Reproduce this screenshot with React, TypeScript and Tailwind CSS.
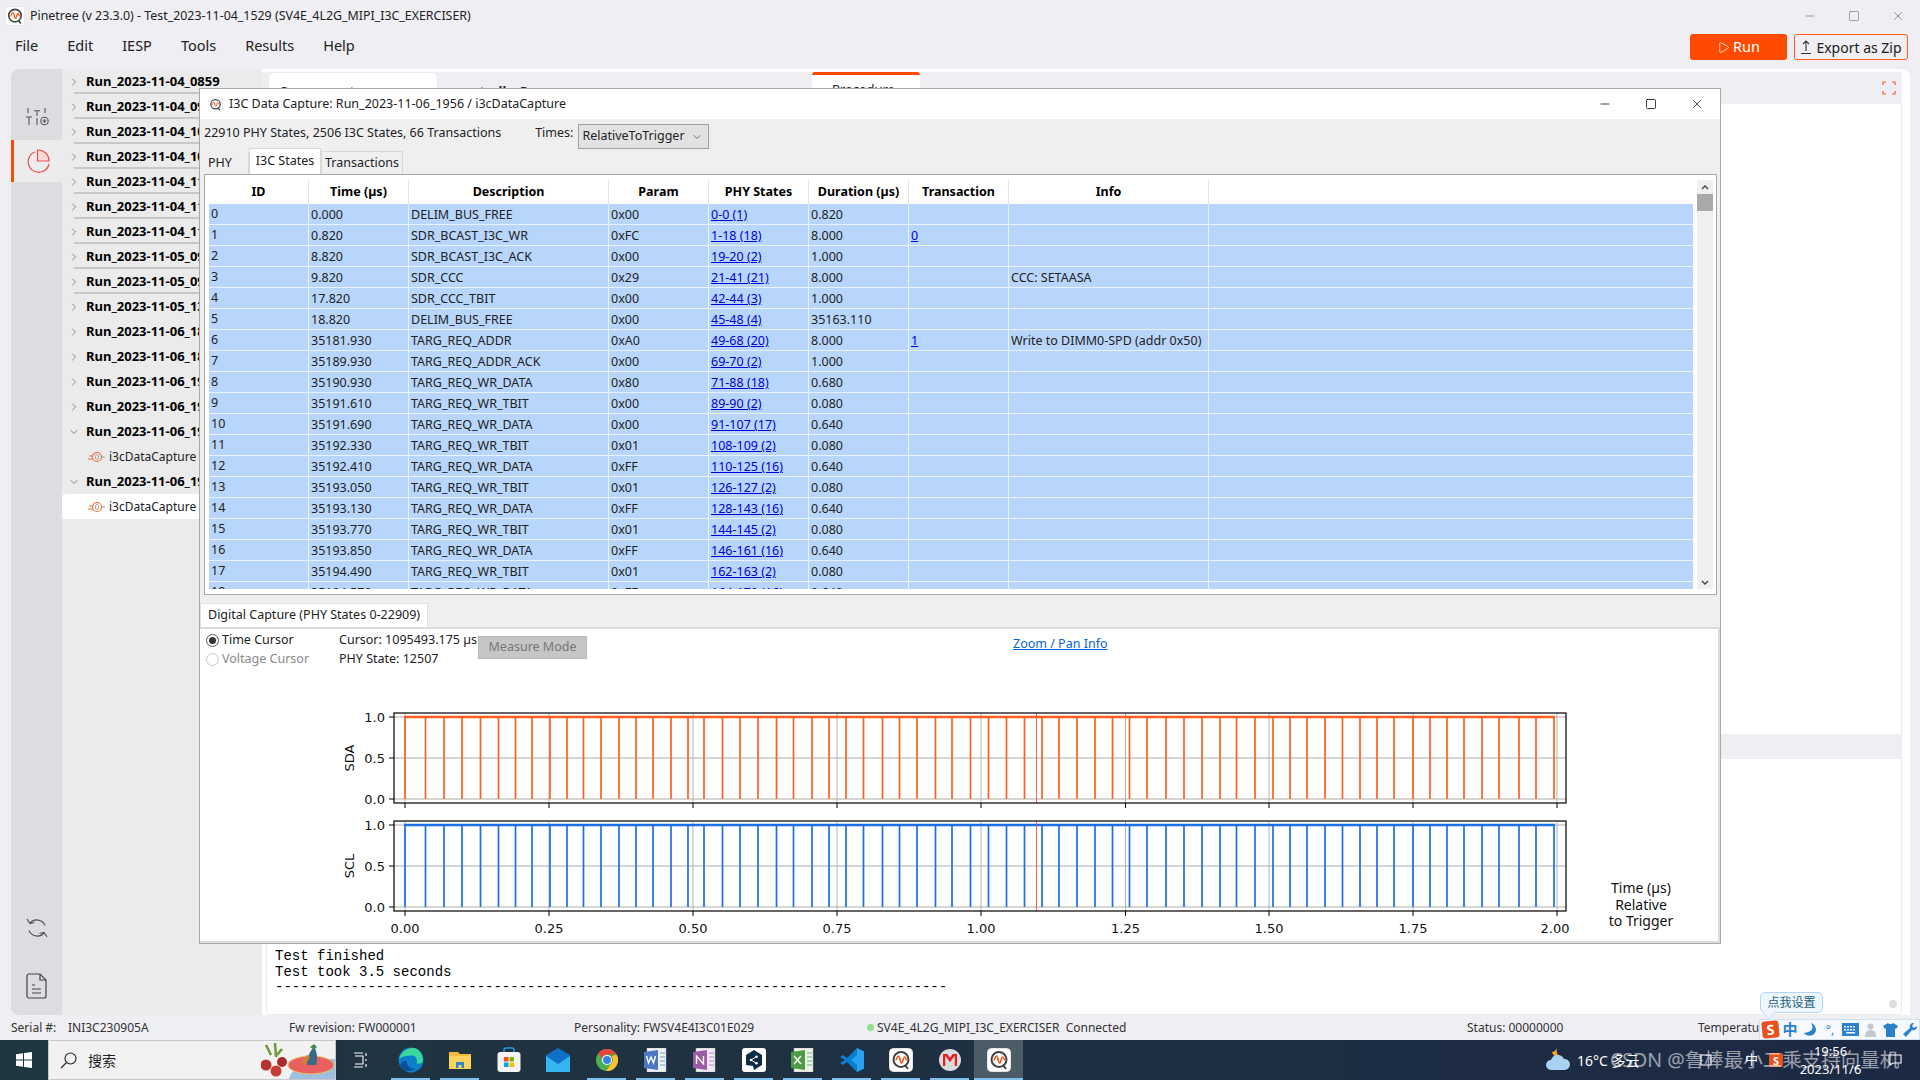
import { ChevronDown, ChevronRight, Minus, Play, Square, X } from 'lucide-react';

const runs = [
  { label: 'Run_2023-11-04_0859', line: true },
  { label: 'Run_2023-11-04_0903', line: true },
  { label: 'Run_2023-11-04_1012', line: true },
  { label: 'Run_2023-11-04_1058', line: true },
  { label: 'Run_2023-11-04_1120', line: true },
  { label: 'Run_2023-11-04_1134', line: true },
  { label: 'Run_2023-11-04_1156', line: true },
  { label: 'Run_2023-11-05_0911', line: true },
  { label: 'Run_2023-11-05_0958', line: true },
  { label: 'Run_2023-11-05_1321' },
  { label: 'Run_2023-11-06_1810' },
  { label: 'Run_2023-11-06_1845' },
  { label: 'Run_2023-11-06_1902' },
  { label: 'Run_2023-11-06_1931' },
  { label: 'Run_2023-11-06_1948', open: true },
  { label: 'Run_2023-11-06_1956', open: true, selected: true },
];

const rows = [
  ['0', '0.000', 'DELIM_BUS_FREE', '0x00', '0-0 (1)', '0.820', '', ''],
  ['1', '0.820', 'SDR_BCAST_I3C_WR', '0xFC', '1-18 (18)', '8.000', '0', ''],
  ['2', '8.820', 'SDR_BCAST_I3C_ACK', '0x00', '19-20 (2)', '1.000', '', ''],
  ['3', '9.820', 'SDR_CCC', '0x29', '21-41 (21)', '8.000', '', 'CCC: SETAASA'],
  ['4', '17.820', 'SDR_CCC_TBIT', '0x00', '42-44 (3)', '1.000', '', ''],
  ['5', '18.820', 'DELIM_BUS_FREE', '0x00', '45-48 (4)', '35163.110', '', ''],
  ['6', '35181.930', 'TARG_REQ_ADDR', '0xA0', '49-68 (20)', '8.000', '1', 'Write to DIMM0-SPD (addr 0x50)'],
  ['7', '35189.930', 'TARG_REQ_ADDR_ACK', '0x00', '69-70 (2)', '1.000', '', ''],
  ['8', '35190.930', 'TARG_REQ_WR_DATA', '0x80', '71-88 (18)', '0.680', '', ''],
  ['9', '35191.610', 'TARG_REQ_WR_TBIT', '0x00', '89-90 (2)', '0.080', '', ''],
  ['10', '35191.690', 'TARG_REQ_WR_DATA', '0x00', '91-107 (17)', '0.640', '', ''],
  ['11', '35192.330', 'TARG_REQ_WR_TBIT', '0x01', '108-109 (2)', '0.080', '', ''],
  ['12', '35192.410', 'TARG_REQ_WR_DATA', '0xFF', '110-125 (16)', '0.640', '', ''],
  ['13', '35193.050', 'TARG_REQ_WR_TBIT', '0x01', '126-127 (2)', '0.080', '', ''],
  ['14', '35193.130', 'TARG_REQ_WR_DATA', '0xFF', '128-143 (16)', '0.640', '', ''],
  ['15', '35193.770', 'TARG_REQ_WR_TBIT', '0x01', '144-145 (2)', '0.080', '', ''],
  ['16', '35193.850', 'TARG_REQ_WR_DATA', '0xFF', '146-161 (16)', '0.640', '', ''],
  ['17', '35194.490', 'TARG_REQ_WR_TBIT', '0x01', '162-163 (2)', '0.080', '', ''],
  ['18', '35194.570', 'TARG_REQ_WR_DATA', '0xFF', '164-179 (16)', '0.640', '', ''],
];

const headers = ['ID', 'Time (µs)', 'Description', 'Param', 'PHY States', 'Duration (µs)', 'Transaction', 'Info', ''];
const tableCols = 'grid grid-cols-[100px_100px_200px_100px_100px_100px_100px_200px_1fr]';

// pulse x positions, in page pixels
const pulses = [
  404, 424.5, 443, 461, 479.5, 497.5, 514.5, 531, 549, 566, 582.5, 600, 618, 635, 652, 670, 687, 703, 721.5, 739, 757,
  775.5, 792.5, 811, 828, 845, 862.5, 881.5, 898.5, 916, 934.5, 951, 969.5, 987.5, 1005.5, 1023.5, 1041, 1058, 1076,
  1094, 1111.5, 1128.5, 1146, 1165, 1183, 1201, 1219, 1235.5, 1254, 1272, 1289, 1306, 1324, 1341.5, 1359, 1376, 1393,
  1412, 1429, 1446, 1463, 1481, 1498, 1518, 1535, 1553,
];
const xTicks = [
  { x: 404, label: '0.00' },
  { x: 548, label: '0.25' },
  { x: 692, label: '0.50' },
  { x: 836, label: '0.75' },
  { x: 980, label: '1.00' },
  { x: 1124.5, label: '1.25' },
  { x: 1268, label: '1.50' },
  { x: 1412, label: '1.75' },
  { x: 1556, label: '2.00' },
];

function AppLogo({ size = 20 }: { size?: number }) {
  return (
    <svg width={size} height={size} viewBox="0 0 24 24">
      <rect x="0.5" y="0.5" width="23" height="23" rx="4" fill="#fff" stroke="#e4e4e4" />
      <circle cx="12" cy="11.5" r="7.5" fill="none" stroke="#444" strokeWidth="2" />
      <path d="M16 17l3 4" stroke="#444" strokeWidth="2" />
      <path d="M6.5 12c1.5 0 1.5-4 3-4s1.5 7 3 7 1.5-6 3-6 1 3 2.500 3" fill="none" stroke="#f05a22" strokeWidth="1.6" />
    </svg>
  );
}

function CaptureIcon() {
  return (
    <svg width="18" height="12" viewBox="0 0 18 12" className="shrink-0">
      <circle cx="9" cy="6" r="4.500" fill="none" stroke="#f0703a" strokeWidth="1.200" />
      <rect x="7.500" y="3.500" width="3" height="5" rx="1.500" fill="none" stroke="#999" strokeWidth="0.800" />
      <path d="M0 8h5M1 5h3" stroke="#f0703a" strokeWidth="1" />
      <path d="M14 6h3" stroke="#999" strokeWidth="1" />
    </svg>
  );
}

function SlidersIcon() {
  return (
    <svg width="24" height="20" viewBox="0 0 24 20" fill="none" stroke="#555" strokeWidth="1.100">
      <path d="M3 1v5M12 4v5M20 1v5M9 3.800h6M1 10h6M4 10v8M12 11v7" />
      <circle cx="19.500" cy="14" r="3.700" />
      <path d="M17.500 14h4M19.500 12v4" />
    </svg>
  );
}

function PieIcon() {
  return (
    <svg width="24" height="24" viewBox="0 0 24 24" fill="none" stroke="#e8504f" strokeWidth="1.200">
      <path d="M9.500 2.800A10.500 10.500 0 1 0 23 15" />
      <path d="M11.500 1v11H23A11 11 0 0 0 11.500 1z" fill="#fbd9d6" />
    </svg>
  );
}

function RefreshIcon() {
  return (
    <svg width="24" height="24" viewBox="0 0 24 24" fill="none" stroke="#555" strokeWidth="1.200">
      <path d="M5 7a9 9 0 0 1 15 2.500M19 17a9 9 0 0 1-15-2.500" />
      <path d="M2 3l3 4.500 4.500-1M22 21l-3-4.500-4.500 1" />
    </svg>
  );
}

function DocIcon() {
  return (
    <svg width="22" height="26" viewBox="0 0 22 26" fill="none" stroke="#444" strokeWidth="1.200">
      <path d="M3 1h11l6 6v16a2 2 0 0 1-2 2H3a2 2 0 0 1-2-2V3a2 2 0 0 1 2-2z" />
      <path d="M14 1v6h6M6 12h3M6 16h9M6 20h9" />
    </svg>
  );
}

function ExportIcon() {
  return (
    <svg width="12" height="16" viewBox="0 0 12 16" fill="none" stroke="#333" strokeWidth="1.100">
      <path d="M6 12V2M3 5l3-3 3 3M1 14.500h10" />
    </svg>
  );
}

function EdgeIcon() {
  return (
    <svg width="26" height="26" viewBox="0 0 24 24">
      <circle cx="12" cy="12" r="11.500" fill="#0c7fc8" />
      <path d="M1 11C3 3 10 0 15 1c5 1 8 6 8 11 0 3-3 4-6 3 2-5-2-8-6-7-4 0-8 1-10 3z" fill="#3bd5a0" />
      <path d="M8 13c0 5 4 8 8 7-5 4-12 2-14-3 1-3 4-5 6-4z" fill="#0a4f9c" />
    </svg>
  );
}
function FolderIcon() {
  return (
    <svg width="22" height="20" viewBox="0 0 22 20">
      <path d="M0 2h9l2 2h11v15H0z" fill="#f2bb3c" />
      <path d="M0 6h22v13H0z" fill="#fbd45e" />
      <path d="M7 18v-6h8v6h-2.500v-3h-3v3z" fill="#2f87c9" />
    </svg>
  );
}
function StoreIcon() {
  return (
    <svg width="24" height="26" viewBox="0 0 24 26">
      <path d="M7 6V3a2 2 0 0 1 2-2h6a2 2 0 0 1 2 2v3" fill="none" stroke="#1f9fe0" strokeWidth="1.500" />
      <rect x="0.500" y="5" width="23" height="20" rx="3" fill="#f4f4f4" />
      <rect x="7" y="10" width="4.500" height="4.500" fill="#f25022" />
      <rect x="12.500" y="10" width="4.500" height="4.500" fill="#7fba00" />
      <rect x="7" y="15.500" width="4.500" height="4.500" fill="#00a4ef" />
      <rect x="12.500" y="15.500" width="4.500" height="4.500" fill="#ffb900" />
    </svg>
  );
}
function MailIcon() {
  return (
    <svg width="24" height="24" viewBox="0 0 24 24">
      <path d="M12 0l12 7v17H0V7z" fill="#0f6fc6" />
      <path d="M0 8l12 8 12-8v16H0z" fill="#35b6f2" />
    </svg>
  );
}
function ChromeIcon() {
  return (
    <svg width="22" height="22" viewBox="0 0 24 24">
      <circle cx="12" cy="12" r="12" fill="#4caf50" />
      <path d="M12 0a12 12 0 0 1 10.400 6H12a6 6 0 0 0-5.800 4.500L2.400 5A12 12 0 0 1 12 0z" fill="#e8453c" />
      <path d="M22.400 6A12 12 0 0 1 11 24l5.400-8A6 6 0 0 0 17 8z" fill="#fbc02d" />
      <circle cx="12" cy="12" r="5.500" fill="#fff" />
      <circle cx="12" cy="12" r="4.300" fill="#3f7fe8" />
    </svg>
  );
}
function DocTile({ page, main, accent, mark }: { page: string; main: string; accent: string; mark: string }) {
  return (
    <svg width="23" height="24" viewBox="0 0 23 24">
      <path d="M3 0h19v24H3z" fill={page} stroke="#aeb4bb" strokeWidth="0.500" />
      <path d="M0 4l14-2v20L0 20z" fill={main} />
      <path d="M16 5h5M16 9h5M16 13h5M16 17h5" stroke={accent} strokeWidth="1.500" />
      <path d={mark} fill="none" stroke="#fff" strokeWidth="1.400" />
    </svg>
  );
}
function DeepLIcon() {
  return (
    <div className="flex h-[24px] w-[24px] items-center justify-center rounded-[3px] bg-white">
      <svg width="18" height="20" viewBox="0 0 18 20">
        <path d="M9 0l8 5v10l-8 5-1-4-7-1V5z" fill="#0f2b46" />
        <path d="M6 10l5-3M6 10l5 3" stroke="#fff" strokeWidth="1" />
        <circle cx="6" cy="10" r="1.300" fill="#fff" />
        <circle cx="11.500" cy="6.800" r="1.300" fill="#fff" />
        <circle cx="11.500" cy="13.200" r="1.300" fill="#fff" />
      </svg>
    </div>
  );
}
function VsCodeIcon() {
  return (
    <svg width="24" height="24" viewBox="0 0 24 24">
      <path d="M17 0l7 3.500v17L17 24 7 14l-4 3-3-2 5-3-5-3 3-2 4 3z" fill="#0a7fd0" />
      <path d="M17 0l7 3.500v17L17 24V17l-6-5 6-5z" fill="#2aa1ee" />
    </svg>
  );
}
function MIcon() {
  return (
    <div className="flex h-[22px] w-[22px] items-center justify-center rounded-full bg-[#dcdcdc]">
      <svg width="14" height="12" viewBox="0 0 14 12">
        <path d="M1 12V1h2.500L7 6l3.500-5H13v11" fill="none" stroke="#e02020" strokeWidth="2.500" />
      </svg>
    </div>
  );
}
function Doodle() {
  return (
    <svg width="74" height="38" viewBox="0 0 74 38" className="shrink-0">
      <path d="M28 38c4-14 22-20 46-20v20z" fill="#9cc0dd" />
      <ellipse cx="50" cy="24" rx="23" ry="9" fill="#e86060" stroke="#e8c86a" />
      <path d="M46 24c0-8 3-14 7-18 3 4 4 12 2 18z" fill="#3b6a86" />
      <path d="M49 6l4-3 3 3-3 3z" fill="#4a8a5a" />
      <path d="M46 14l-6 8 5 1 4-8z" fill="#d8812e" />
      <path d="M5 4l5 10M14 2l1 14M21 8l-5 6" stroke="#6f9a3c" strokeWidth="2.500" />
      <circle cx="5" cy="24" r="5.500" fill="#b8322e" />
      <circle cx="15" cy="30" r="5.500" fill="#c63c36" />
      <circle cx="21" cy="21" r="5" fill="#a82c2a" />
    </svg>
  );
}
function WeatherIcon() {
  return (
    <svg width="26" height="24" viewBox="0 0 26 24" className="shrink-0">
      <path d="M12 0c-1 4 0 7 4 9-4 1-8-1-9-5 2 0 4-2 5-4z" fill="#f5a623" />
      <path d="M6 22a5 5 0 0 1 0-10 7 7 0 0 1 13-1 5.500 5.500 0 0 1 1 11z" fill="#a9d2f2" />
    </svg>
  );
}

function SogouBadge({ size, tilt }: { size: number; tilt?: boolean }) {
  return (
    <span
      className={
        tilt
          ? 'flex shrink-0 -rotate-6 items-center justify-center rounded-[3px] bg-[#e8531d] font-bold leading-none text-white'
          : 'flex shrink-0 items-center justify-center rounded-[2px] bg-[#e8531d] font-bold leading-none text-white'
      }
      style={{ width: size, height: size, fontSize: size - 3 }}
    >
      S
    </span>
  );
}

function PlotAxes({
  top,
  color,
  yLabel,
  showXLabels,
}: {
  top: number;
  color: string;
  yLabel: string;
  showXLabels?: boolean;
}) {
  const bottom = top + 90;
  const hi = top + 4;
  const mid = top + 45;
  const lo = top + 86;
  return (
    <g>
      {xTicks.map((t) => (
        <line key={t.x} x1={t.x} x2={t.x} y1={top} y2={bottom} stroke="#b4b4b4" strokeWidth="1" />
      ))}
      {[hi, mid, lo].map((y) => (
        <line key={y} x1="393" x2="1565" y1={y} y2={y} stroke="#adadad" strokeWidth="1" />
      ))}
      {pulses.map((x) => (
        <line key={x} x1={x} x2={x} y1={hi} y2={lo} stroke={color} strokeWidth="1.700" />
      ))}
      <line x1="403" x2="1554" y1={hi} y2={hi} stroke={color} strokeWidth="2.400" />
      <line x1="1035.5" x2="1035.5" y1={top} y2={bottom} stroke="#e8413a" strokeWidth="0.800" />
      <rect x="393" y={top} width="1172" height="90" fill="none" stroke="#000" strokeWidth="1.200" />
      {xTicks.map((t) => (
        <line key={t.x} x1={t.x} x2={t.x} y1={bottom} y2={bottom + 5} stroke="#000" strokeWidth="1" />
      ))}
      {[
        { y: hi, label: '1.0' },
        { y: mid, label: '0.5' },
        { y: lo, label: '0.0' },
      ].map((t) => (
        <g key={t.label}>
          <line x1="388" x2="393" y1={t.y} y2={t.y} stroke="#000" strokeWidth="1" />
          <text x="384" y={t.y + 5} textAnchor="end" fontSize="13" fontFamily="DejaVu Sans" fill="#111">
            {t.label}
          </text>
        </g>
      ))}
      <text
        x="353"
        y={mid}
        transform={`rotate(-90 353 ${mid})`}
        textAnchor="middle"
        fontSize="13"
        fontFamily="DejaVu Sans"
        fill="#111"
      >
        {yLabel}
      </text>
      {showXLabels &&
        xTicks.map((t) => (
          <text
            key={t.x}
            x={t.label === '2.00' ? 1554 : t.x}
            y={bottom + 22}
            textAnchor="middle"
            fontSize="13"
            fontFamily="DejaVu Sans"
            fill="#111"
          >
            {t.label}
          </text>
        ))}
    </g>
  );
}

function Tree() {
  return (
    <div className="flex w-[200px] shrink-0 flex-col bg-[#ebebeb]">
      {runs.map((run) => (
        <div key={run.label} className="flex flex-col">
          <div className={run.line ? 'ml-[12px] h-[25px] border-b-2 border-[#c8c8c8]' : 'ml-[12px] h-[25px]'}>
            <div className="-ml-[6px] flex h-[25px] items-center gap-[6px] whitespace-nowrap text-[13px] font-bold text-black">
              {run.open ? (
                <ChevronDown size={12} strokeWidth={1.2} className="shrink-0 text-[#444]" />
              ) : (
                <ChevronRight size={12} strokeWidth={1.2} className="shrink-0 text-[#444]" />
              )}
              <span>{run.label}</span>
            </div>
          </div>
          {run.open && (
            <div
              className={
                run.selected
                  ? 'flex h-[25px] items-center gap-[3px] rounded-l-[4px] bg-white pl-[26px] text-[12px] text-[#222]'
                  : 'flex h-[25px] items-center gap-[3px] pl-[26px] text-[12px] text-[#222]'
              }
            >
              <CaptureIcon />
              <span>i3cDataCapture</span>
            </div>
          )}
        </div>
      ))}
    </div>
  );
}

function Dialog() {
  return (
    <div className="absolute left-[199px] top-[88px] flex h-[856px] w-[1522px] flex-col border border-[#a8a8a8] bg-[#efefef] text-[12.5px] text-[#222]">
      {/* Title bar */}
      <div className="flex h-[30px] shrink-0 items-center bg-white pl-[8px]">
        <AppLogo size={15} />
        <span className="ml-[6px]">I3C Data Capture: Run_2023-11-06_1956 / i3cDataCapture</span>
        <div className="ml-auto flex items-center gap-[33px] pr-[16px] text-black">
          <Minus size={14} strokeWidth={1.2} />
          <Square size={12} strokeWidth={1.5} />
          <X size={14} strokeWidth={1.2} />
        </div>
      </div>

      {/* Counts and time mode */}
      <div className="flex h-[30px] shrink-0 pl-[4px]">
        <span className="mt-[5px]">22910 PHY States, 2506 I3C States, 66 Transactions</span>
        <span className="ml-[34px] mt-[5px]">Times:</span>
        <div className="ml-[5px] flex h-[25px] w-[131px] items-center justify-between self-end border border-[#a0a0a0] bg-[#e2e2e2] pl-[3px] pr-[5px]">
          <span>RelativeToTrigger</span>
          <ChevronDown size={12} strokeWidth={1.2} />
        </div>
      </div>

      {/* Tabs */}
      <div className="flex h-[25px] shrink-0 items-end pl-[1px]">
        <div className="flex h-[21px] w-[48px] items-center border-r border-[#d8d8d8] pl-[7px]">PHY</div>
        <div className="flex h-[26px] w-[72px] items-center justify-center border border-b-0 border-[#d8d8d8] bg-white">
          I3C States
        </div>
        <div className="flex h-[23px] w-[82px] items-center justify-center border border-b-0 border-[#d8d8d8]">
          Transactions
        </div>
      </div>

      {/* States table */}
      <div className="ml-[4px] mr-[3px] flex h-[421px] shrink-0 border border-[#a8a8a8] bg-white p-[4px] pb-[5px] pr-[3px] pt-[5px]">
        <div className="flex min-w-0 flex-1 flex-col overflow-hidden">
          <div className={`${tableCols} h-[24px] shrink-0 bg-white font-bold text-black`}>
            {headers.map((h, i) => (
              <div key={i} className="flex items-center justify-center border-r border-[#e4e4e4] last:border-r-0">
                {h}
              </div>
            ))}
          </div>
          {rows.map((r) => (
            <div key={r[0]} className={`${tableCols} h-[21px] shrink-0 border-b border-[#e9f1fb] bg-[#b8d6fb]`}>
              <div className="flex items-center border-r border-[#e9f1fb] pl-[2px]">{r[0]}</div>
              <div className="flex items-center border-r border-[#e9f1fb] pl-[2px] pt-[2px]">{r[1]}</div>
              <div className="flex items-center border-r border-[#e9f1fb] pl-[2px] pt-[2px]">{r[2]}</div>
              <div className="flex items-center border-r border-[#e9f1fb] pl-[2px] pt-[2px]">{r[3]}</div>
              <div className="flex items-center border-r border-[#e9f1fb] pl-[2px] pt-[2px] text-[#0000d8] underline">{r[4]}</div>
              <div className="flex items-center border-r border-[#e9f1fb] pl-[2px] pt-[2px]">{r[5]}</div>
              <div className="flex items-center border-r border-[#e9f1fb] pl-[2px] pt-[2px] text-[#0000d8] underline">{r[6]}</div>
              <div className="flex items-center whitespace-nowrap border-r border-[#e9f1fb] pl-[2px] pt-[2px]">{r[7]}</div>
              <div />
            </div>
          ))}
        </div>
        {/* Scrollbar */}
        <div className="ml-[4px] flex w-[16px] shrink-0 flex-col items-center bg-[#f0f0f0] text-[#555]">
          <svg width="10" height="14" viewBox="0 0 10 14" className="shrink-0" fill="none" stroke="#444" strokeWidth="1.400">
            <path d="M2 9l3-3 3 3" />
          </svg>
          <div className="h-[17px] w-full shrink-0 bg-[#a9a9a9]" />
          <svg width="10" height="14" viewBox="0 0 10 14" className="mt-auto shrink-0" fill="none" stroke="#444" strokeWidth="1.400">
            <path d="M2 6l3 3 3-3" />
          </svg>
        </div>
      </div>

      {/* Capture tab */}
      <div className="mt-[8px] flex h-[24px] w-[228px] shrink-0 items-center border border-b-0 border-[#e0e0e0] bg-white pl-[7px]">
        Digital Capture (PHY States 0-22909)
      </div>

      {/* Capture panel */}
      <div className="flex min-h-0 flex-1 flex-col border-2 border-[#dcdcdc] border-l-0 bg-white">
        <div className="flex h-[60px] shrink-0 pt-[3px]">
          <div className="ml-[6px] flex w-[133px] flex-col gap-[3px]">
            <div className="flex h-[16px] items-center gap-[3px]">
              <span className="flex h-[13px] w-[13px] items-center justify-center rounded-full border border-[#555]">
                <span className="h-[7px] w-[7px] rounded-full bg-[#333]" />
              </span>
              Time Cursor
            </div>
            <div className="flex h-[16px] items-center gap-[3px] text-[#8a8a8a]">
              <span className="h-[13px] w-[13px] rounded-full border border-[#c8c8c8]" />
              Voltage Cursor
            </div>
          </div>
          <div className="flex w-[139px] flex-col gap-[3px] whitespace-nowrap">
            <div className="flex h-[16px] items-center">Cursor: 1095493.175 µs</div>
            <div className="flex h-[16px] items-center">PHY State: 12507</div>
          </div>
          <div className="mt-[4px] flex h-[23px] w-[109px] items-center justify-center border border-[#b8b8b8] bg-[#c6c6c6] text-[#777]">
            Measure Mode
          </div>
          <span className="ml-[426px] mt-[3px] h-[16px] text-[#0a66d6] underline">Zoom / Pan Info</span>
        </div>
        <svg width="1520" height="252" viewBox="199 690 1520 252" className="block shrink-0">
          <PlotAxes top={714} color="#ff5f1f" yLabel="SDA" />
          <PlotAxes top={822} color="#1a6fe8" yLabel="SCL" showXLabels />
          <g fontSize="14" fill="#111" textAnchor="middle">
            <text x="1640" y="894">Time (µs)</text>
            <text x="1640" y="911">Relative</text>
            <text x="1640" y="927">to Trigger</text>
          </g>
        </svg>
      </div>
    </div>
  );
}

function TaskSlot({ bar, active, children }: { bar?: boolean; active?: boolean; children?: React.ReactNode }) {
  return (
    <div className={active ? 'relative flex h-full w-[49px] items-center justify-center bg-[#4b5c66]' : 'relative flex h-full w-[49px] items-center justify-center'}>
      {children}
      {bar && <span className={active ? 'absolute bottom-0 left-0 right-0 h-[2px] bg-[#7fc0ee]' : 'absolute bottom-0 left-[5px] right-[5px] h-[2px] bg-[#7fc0ee]'} />}
    </div>
  );
}

export default function App() {
  return (
    <div className="relative flex h-[1080px] w-[1920px] flex-col overflow-hidden bg-[#eeeef3] font-['Noto_Sans','Noto_Sans_CJK_SC',sans-serif] text-[12px] text-[#222]">
      {/* Title bar */}
      <div className="flex h-[32px] shrink-0 items-center pl-[5px]">
        <AppLogo size={20} />
        <span className="ml-[5px] text-[12.4px]">Pinetree (v 23.3.0) - Test_2023-11-04_1529 (SV4E_4L2G_MIPI_I3C_EXERCISER)</span>
        <div className="ml-auto flex items-center gap-[31px] pr-[15px] text-[#555]">
          <Minus size={14} strokeWidth={1} />
          <Square size={12} strokeWidth={1} />
          <X size={14} strokeWidth={1} />
        </div>
      </div>

      {/* Menu bar */}
      <div className="flex h-[37px] shrink-0 items-start">
        <div className="flex h-[27px] items-center gap-[29px] pl-[15px] text-[14.5px] text-[#222]">
          <span>File</span>
          <span>Edit</span>
          <span>IESP</span>
          <span>Tools</span>
          <span>Results</span>
          <span>Help</span>
        </div>
        <div className="ml-auto mt-[2px] flex gap-[7px] pr-[12px]">
          <div className="flex h-[26px] w-[97px] items-center justify-center gap-[3px] rounded-[3px] bg-[#ff4a00] text-[14.5px] text-white">
            <Play size={13} strokeWidth={1.5} />
            Run
          </div>
          <div className="flex h-[26px] w-[114px] items-center justify-center gap-[4px] rounded-[3px] border border-[#ff5a1f] text-[14px]">
            <ExportIcon />
            Export as Zip
          </div>
        </div>
      </div>

      {/* Main */}
      <div className="flex h-[946px] shrink-0 pl-[11px] pr-[10px]">
        <div className="flex w-[51px] shrink-0 flex-col overflow-hidden rounded-bl-[8px] rounded-tl-[8px] bg-[#dcdde0]">
          <div className="flex h-[71px] shrink-0 items-end justify-center pb-[13px]">
            <SlidersIcon />
          </div>
          <div className="flex h-[42px] shrink-0 items-center justify-center border-l-[3px] border-[#ff4a00] bg-[#ececec]">
            <PieIcon />
          </div>
          <div className="mt-auto flex flex-col items-center gap-[33px] pb-[16px]">
            <RefreshIcon />
            <DocIcon />
          </div>
        </div>
        <Tree />

        {/* Main content behind the dialog */}
        <div className="flex min-w-0 flex-1 flex-col overflow-hidden rounded-tr-[8px] border-r-[8px] border-white bg-white">
          <div className="mt-[3px] flex h-[32px] shrink-0 bg-[#eeeef3]">
            <div className="relative ml-[6px] h-full w-[170px] rounded-t-[6px] border border-[#ececec] bg-white pl-[10px] pt-[9px] text-[13px] font-bold">
              Components
            </div>
            <div className="h-full w-[367px] pl-[18px] pt-[10px] text-[13px] font-bold">controllerParams</div>
            <div className="ml-[7px] h-full w-[108px] rounded-t-[3px] border-t-[3px] border-[#ff4a00] bg-white pl-[20px] pt-[5px] text-[13px]">
              Procedure
            </div>
            <div className="ml-auto flex items-center pr-[6px]">
              <svg width="14" height="14" viewBox="0 0 14 14" fill="none" stroke="#ff5a2a" strokeWidth="1.200">
                <path d="M1 4V1h3M10 1h3v3M13 10v3h-3M4 13H1v-3" />
              </svg>
            </div>
          </div>
          <div className="ml-[4px] flex min-h-0 flex-1 flex-col rounded-b-[4px] border-x border-b border-[#ececec]">
            <div className="ml-auto mt-[630px] h-[25px] w-[180px] shrink-0 bg-[#eeeef3]" />
            <div className="mt-[190px] whitespace-pre pl-[8px] font-['Liberation_Mono',monospace] text-[14px] leading-[15.5px] text-black">
              {'Test finished\nTest took 3.5 seconds\n' + '-'.repeat(80)}
            </div>
            <span className="mb-[6px] ml-auto mr-[4px] mt-auto h-[8px] w-[8px] shrink-0 rounded-full bg-[#dcdde0]" />
          </div>
        </div>
      </div>

      {/* Status bar */}
      <div className="flex h-[25px] shrink-0 items-center whitespace-nowrap pl-[11px] text-[12px] text-[#333]">
        <span className="w-[57px]">Serial #:</span>
        <span className="w-[221px]">INI3C230905A</span>
        <span className="w-[285px]">Fw revision: FW000001</span>
        <span className="w-[293px]">Personality: FWSV4E4I3C01E029</span>
        <span className="flex w-[600px] items-center gap-[3px]">
          <span className="h-[7px] w-[7px] rounded-full bg-[#8ee08e]" />
          SV4E_4L2G_MIPI_I3C_EXERCISER&nbsp;&nbsp;Connected
        </span>
        <span className="w-[231px]">Status: 00000000</span>
        <span>Temperature</span>
      </div>

      {/* Taskbar */}
      <div className="flex h-[40px] shrink-0 items-center bg-gradient-to-r from-[#20363f] to-[#1c2944] text-white">
        <div className="flex h-full w-[48px] shrink-0 items-center justify-center">
          <svg width="16" height="16" viewBox="0 0 16 16" fill="#fff">
            <path d="M0 2.200l7-1v6.400H0zM8 1l8-1v7.600H8zM0 8.400h7v6.400l-7-1zM8 8.400h8V16l-8-1.100z" />
          </svg>
        </div>
        <div className="flex h-full w-[288px] shrink-0 items-center overflow-hidden border border-[#c8c8c8] bg-[#f2f2f2] pl-[11px] text-[14px] text-[#222]">
          <svg width="17" height="17" viewBox="0 0 17 17" fill="none" stroke="#222" strokeWidth="1.100">
            <circle cx="10.500" cy="6.500" r="5.500" />
            <path d="M6.500 10.500L1 16" />
          </svg>
          <span className="ml-[11px]">搜索</span>
          <span className="ml-auto">
            <Doodle />
          </span>
        </div>
        <div className="flex h-full w-[50px] shrink-0 items-center justify-center">
          <svg width="16" height="16" viewBox="0 0 16 16" fill="none" stroke="#fff" strokeWidth="1.100">
            <path d="M1 1h9M1 15h9M2 4h8v8H2M13 1v3M13 7v2M13 12v3" />
          </svg>
        </div>
        <div className="flex h-full shrink-0">
          <TaskSlot bar><EdgeIcon /></TaskSlot>
          <TaskSlot bar><FolderIcon /></TaskSlot>
          <TaskSlot><StoreIcon /></TaskSlot>
          <TaskSlot><MailIcon /></TaskSlot>
          <TaskSlot bar><ChromeIcon /></TaskSlot>
          <TaskSlot bar><DocTile page="#eef2f8" main="#4a78c4" accent="#9db7df" mark="M2.500 8l2 7 2.500-6 2.500 6 2-7" /></TaskSlot>
          <TaskSlot bar><DocTile page="#f0ebf2" main="#9a5aa4" accent="#c9a8cf" mark="M3.500 16V8l7 8V8" /></TaskSlot>
          <TaskSlot bar><DeepLIcon /></TaskSlot>
          <TaskSlot bar><DocTile page="#eaf3e4" main="#4f9a48" accent="#9cc79a" mark="M3 8l7 8M10 8l-7 8" /></TaskSlot>
          <TaskSlot bar><VsCodeIcon /></TaskSlot>
          <TaskSlot bar><AppLogo size={24} /></TaskSlot>
          <TaskSlot bar><MIcon /></TaskSlot>
          <TaskSlot bar active><AppLogo size={24} /></TaskSlot>
        </div>
        <div className="ml-[522px] flex h-full shrink-0 items-center">
          <WeatherIcon />
          <span className="ml-[6px] w-[65px] text-[14px]">16°C 多云</span>
          <svg width="12" height="12" viewBox="0 0 12 12" fill="none" stroke="#fff" strokeWidth="1.200" className="ml-[58px]">
            <path d="M1 1h10v10H1z" />
          </svg>
          <span className="ml-[33px] w-[13px] text-[13px]">中</span>
          <span className="ml-[11px]"><SogouBadge size={14} /></span>
          <span className="ml-[17px] flex w-[61px] flex-col items-center text-[13px] leading-[18px]">
            <span>19:56</span>
            <span>2023/11/6</span>
          </span>
          <svg width="14" height="12" viewBox="0 0 14 12" fill="none" stroke="#fff" strokeWidth="1.100" className="ml-[27px]">
            <path d="M1 1h12v8H5l-3 2V9H1z" />
          </svg>
        </div>
      </div>

      <Dialog />

      {/* IME tooltip and bar */}
      <div className="absolute left-[1760px] top-[992px] flex h-[21px] w-[63px] items-center justify-center rounded-[5px] border border-[#b5d6f2] bg-[#eef6fd] text-[12px] text-[#1d5f7a]">
        点我设置
      </div>
      <svg width="12" height="7" viewBox="0 0 12 7" className="absolute left-[1763px] top-[1012px]">
        <path d="M0 0l6 7 6-7" fill="#eef6fd" stroke="#b5d6f2" strokeWidth="0.800" />
      </svg>
      <div className="absolute left-[1759px] top-[1019px] flex h-[21px] w-[161px] items-center border border-[#cfe2f5] bg-[#f6fafe] text-[#2a82cc]">
        <span className="flex w-[20px] shrink-0 justify-center"><SogouBadge size={17} tilt /></span>
        <span className="flex w-[20px] shrink-0 justify-center text-[15px] font-bold leading-none">中</span>
        <span className="flex w-[20px] shrink-0 justify-center">
          <svg width="12" height="14" viewBox="0 0 12 14" fill="#2a82cc">
            <path d="M7 0c3 4 2 9-7 10 3 4 11 4 12-3 0-3-2-6-5-7z" />
          </svg>
        </span>
        <span className="flex w-[20px] shrink-0 justify-center text-[12px] leading-none">°,</span>
        <span className="flex w-[20px] shrink-0 justify-center">
          <svg width="17" height="13" viewBox="0 0 17 13" fill="#2a82cc">
            <path d="M0 0h17v13H0zM2 3v1.500h2V3zm3 0v1.500h2V3zm3 0v1.500h2V3zm3 0v1.500h2V3zM2 6v1.500h2V6zm3 0v1.500h2V6zm3 0v1.500h2V6zm3 0v1.500h2V6zM4 9v1.500h9V9z" fillRule="evenodd" />
          </svg>
        </span>
        <span className="flex w-[20px] shrink-0 justify-center">
          <svg width="11" height="14" viewBox="0 0 11 14" fill="#c4c8cc">
            <circle cx="5.500" cy="3.500" r="3" />
            <path d="M0 14c0-5 2-7 5.500-7S11 9 11 14z" />
          </svg>
        </span>
        <span className="flex w-[20px] shrink-0 justify-center">
          <svg width="15" height="14" viewBox="0 0 15 14" fill="#2a82cc">
            <path d="M5 0L0 3l2 3 1-.500V14h9V5.500l1 .500 2-3-5-3c-1 1.500-4 1.500-5 0z" />
          </svg>
        </span>
        <span className="flex w-[20px] shrink-0 justify-center">
          <svg width="14" height="14" viewBox="0 0 14 14" fill="#2a82cc">
            <path d="M14 3l-3 2-2-2 2-3C8 0 6 2 7 5L0 11l3 3 6-7c3 1 5-1 5-4z" />
          </svg>
        </span>
      </div>

      {/* Page watermark */}
      <div className="pointer-events-none absolute left-[1610px] top-[1046px] whitespace-nowrap text-[19.5px] leading-[28px] text-white/55">
        CSDN @鲁棒最小二乘支持向量机
      </div>
    </div>
  );
}
